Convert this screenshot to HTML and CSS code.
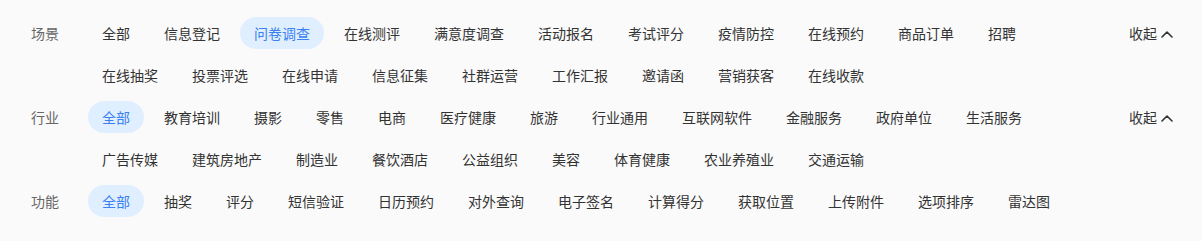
FILE: index.html
```html
<!DOCTYPE html>
<html lang="zh-CN">
<head>
<meta charset="utf-8">
<link rel="stylesheet" href="styles.css">
</head>
<body>
<div class="filters">
  <div class="group">
    <div class="label">场景</div>
    <div class="items">
      <span class="item">全部</span>
      <span class="item">信息登记</span>
      <span class="item active">问卷调查</span>
      <span class="item">在线测评</span>
      <span class="item">满意度调查</span>
      <span class="item">活动报名</span>
      <span class="item">考试评分</span>
      <span class="item">疫情防控</span>
      <span class="item">在线预约</span>
      <span class="item">商品订单</span>
      <span class="item">招聘</span>
      <span class="item">在线抽奖</span>
      <span class="item">投票评选</span>
      <span class="item">在线申请</span>
      <span class="item">信息征集</span>
      <span class="item">社群运营</span>
      <span class="item">工作汇报</span>
      <span class="item">邀请函</span>
      <span class="item">营销获客</span>
      <span class="item">在线收款</span>
    </div>
    <div class="toggle">收起<svg class="chev" viewBox="0 0 12 8" width="12" height="8"><path d="M1 7 L6 2 L11 7" fill="none" stroke="#333" stroke-width="1.6" stroke-linecap="round" stroke-linejoin="round"/></svg></div>
  </div>
  <div class="group">
    <div class="label">行业</div>
    <div class="items">
      <span class="item active">全部</span>
      <span class="item">教育培训</span>
      <span class="item">摄影</span>
      <span class="item">零售</span>
      <span class="item">电商</span>
      <span class="item">医疗健康</span>
      <span class="item">旅游</span>
      <span class="item">行业通用</span>
      <span class="item">互联网软件</span>
      <span class="item">金融服务</span>
      <span class="item">政府单位</span>
      <span class="item">生活服务</span>
      <span class="item">广告传媒</span>
      <span class="item">建筑房地产</span>
      <span class="item">制造业</span>
      <span class="item">餐饮酒店</span>
      <span class="item">公益组织</span>
      <span class="item">美容</span>
      <span class="item">体育健康</span>
      <span class="item">农业养殖业</span>
      <span class="item">交通运输</span>
    </div>
    <div class="toggle">收起<svg class="chev" viewBox="0 0 12 8" width="12" height="8"><path d="M1 7 L6 2 L11 7" fill="none" stroke="#333" stroke-width="1.6" stroke-linecap="round" stroke-linejoin="round"/></svg></div>
  </div>
  <div class="group">
    <div class="label">功能</div>
    <div class="items">
      <span class="item active">全部</span>
      <span class="item">抽奖</span>
      <span class="item">评分</span>
      <span class="item">短信验证</span>
      <span class="item">日历预约</span>
      <span class="item">对外查询</span>
      <span class="item">电子签名</span>
      <span class="item">计算得分</span>
      <span class="item">获取位置</span>
      <span class="item">上传附件</span>
      <span class="item">选项排序</span>
      <span class="item">雷达图</span>
    </div>
    <div class="toggle empty"></div>
  </div>
</div>
</body>
</html>
```

FILE: styles.css
```css
html, body {
  margin: 0;
  padding: 0;
  background: #fafafa;
}
body {
  font-family: "Noto Sans CJK SC", "Noto Sans", sans-serif;
  font-size: 14px;
  color: #333;
  width: 1202px;
  height: 241px;
  overflow: hidden;
}
.filters {
  padding: 17px 25px 0 31px;
  display: flex;
  flex-direction: column;
  gap: 10px;
}
.group {
  display: grid;
  grid-template-columns: 57px 1fr 48px;
  align-items: start;
}
.label {
  line-height: 32px;
  height: 32px;
  color: #666;
}
.items {
  display: flex;
  flex-wrap: wrap;
  column-gap: 6px;
  row-gap: 10px;
  padding-right: 40px;
}
.item {
  height: 32px;
  line-height: 32px;
  padding: 0 14px;
  border-radius: 16px;
  color: #333;
  white-space: nowrap;
}
.item.active {
  background: #e0efff;
  color: #3b7ff0;
}
.toggle {
  display: flex;
  align-items: center;
  height: 32px;
  line-height: 32px;
  color: #333;
  gap: 4px;
  white-space: nowrap;
}
.chev {
  display: block;
  flex: none;
  width: 12px;
  height: 8px;
  margin-top: 2px;
}
```
